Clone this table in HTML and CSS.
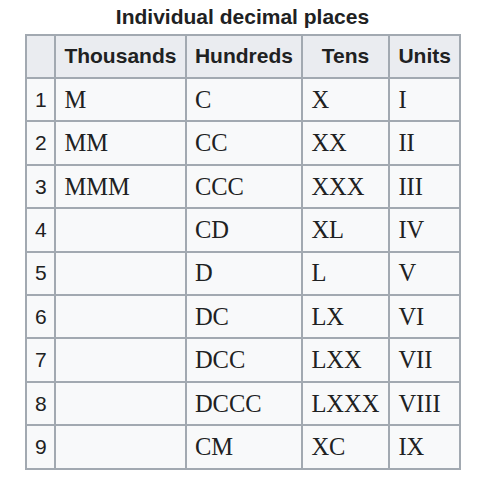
FILE: index.html
```html
<!DOCTYPE html>
<html lang="en">
<head>
<meta charset="utf-8">
<title>Individual decimal places</title>
<link rel="stylesheet" href="styles.css">
</head>
<body>
<table class="wikitable">
  <caption class="title">Individual decimal places</caption>
  <colgroup>
    <col class="c-idx"><col class="c-th"><col class="c-hu"><col class="c-te"><col class="c-un">
  </colgroup>
  <thead>
    <tr><th></th><th>Thousands</th><th>Hundreds</th><th>Tens</th><th>Units</th></tr>
  </thead>
  <tbody>
    <tr><td class="idx">1</td><td class="rn">M</td><td class="rn">C</td><td class="rn">X</td><td class="rn">I</td></tr>
    <tr><td class="idx">2</td><td class="rn">MM</td><td class="rn">CC</td><td class="rn">XX</td><td class="rn">II</td></tr>
    <tr><td class="idx">3</td><td class="rn">MMM</td><td class="rn">CCC</td><td class="rn">XXX</td><td class="rn">III</td></tr>
    <tr><td class="idx">4</td><td class="rn"></td><td class="rn">CD</td><td class="rn">XL</td><td class="rn">IV</td></tr>
    <tr><td class="idx">5</td><td class="rn"></td><td class="rn">D</td><td class="rn">L</td><td class="rn">V</td></tr>
    <tr><td class="idx">6</td><td class="rn"></td><td class="rn">DC</td><td class="rn">LX</td><td class="rn">VI</td></tr>
    <tr><td class="idx">7</td><td class="rn"></td><td class="rn">DCC</td><td class="rn">LXX</td><td class="rn">VII</td></tr>
    <tr><td class="idx">8</td><td class="rn"></td><td class="rn">DCCC</td><td class="rn">LXXX</td><td class="rn">VIII</td></tr>
    <tr><td class="idx">9</td><td class="rn"></td><td class="rn">CM</td><td class="rn">XC</td><td class="rn">IX</td></tr>
  </tbody>
</table>
</body>
</html>
```
FILE: styles.css
```css
html, body {
  margin: 0;
  padding: 0;
  background: #ffffff;
}
body {
  font-family: "Liberation Sans", Arial, sans-serif;
  color: #202122;
  font-size: 21px;
}
.wikitable {
  margin-left: 24.5px;
  border-collapse: collapse;
  table-layout: fixed;
  width: 436px;
  background: #f8f9fa;
  border: 2px solid #a2a9b1;
}
.title {
  font-weight: bold;
  font-size: 21px;
  line-height: 33.6px;
  text-align: center;
  white-space: nowrap;
}
.c-idx { width: 29.5px; }
.c-th { width: 130.5px; }
.c-hu { width: 116.5px; }
.c-te { width: 87px; }
.c-un { width: 70.5px; }
.wikitable tr {
  height: 43.4px;
}
.wikitable th,
.wikitable td {
  border: 2px solid #a2a9b1;
  padding: 0 8.4px;
  line-height: 33.6px;
  vertical-align: middle;
  white-space: nowrap;
  overflow: visible;
}
.wikitable th {
  background: #eaecf0;
  font-weight: bold;
  text-align: center;
}
.wikitable td {
  text-align: left;
}
.idx {
  font-family: "Liberation Sans", Arial, sans-serif;
  font-size: 21px;
}
.rn {
  font-family: "Liberation Serif", "Times New Roman", serif;
  font-size: 24.5px;
}
```
